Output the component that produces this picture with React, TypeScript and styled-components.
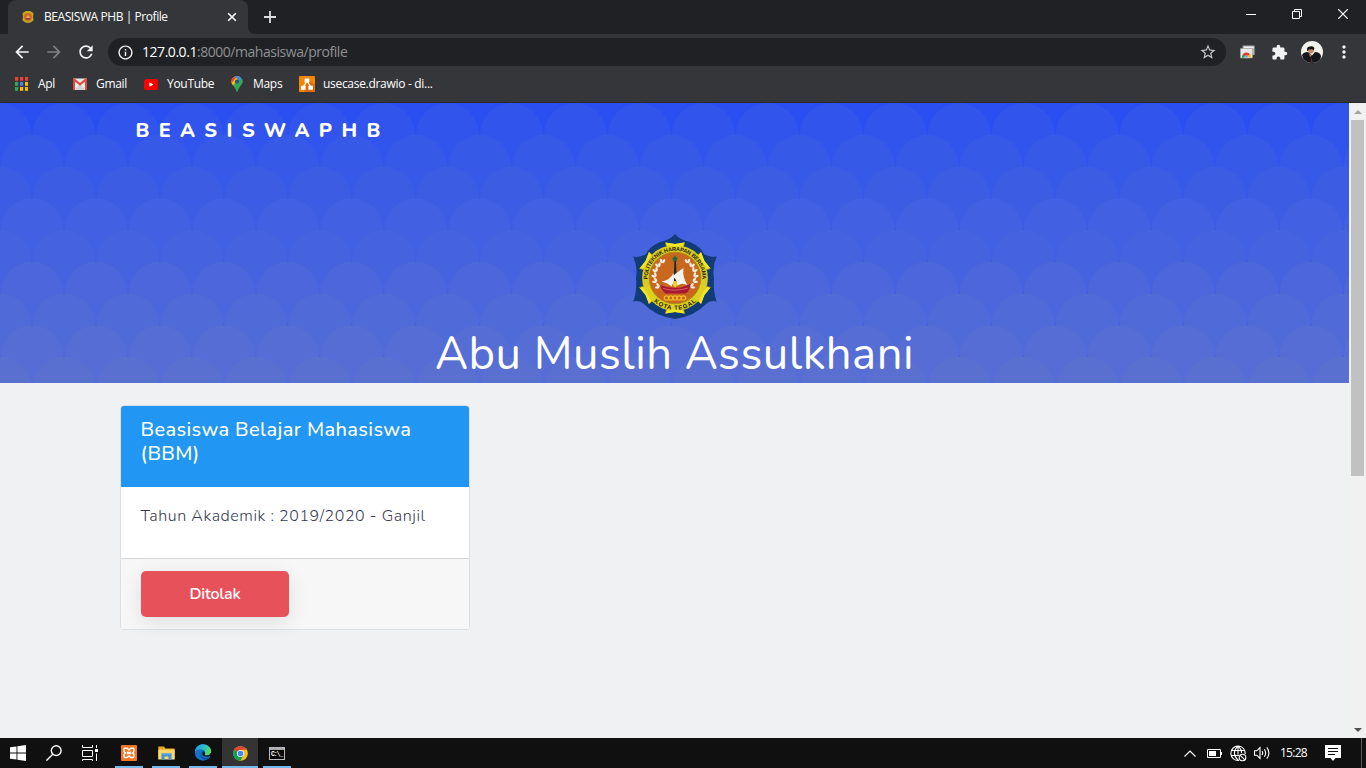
import React from 'react';
import styled, { createGlobalStyle } from 'styled-components';
import {
  MdArrowBack,
  MdArrowForward,
  MdRefresh,
  MdInfoOutline,
  MdStarOutline,
  MdExtension,
  MdMoreVert,
} from 'react-icons/md';

const UI_FONT = '"Open Sans", "Noto Sans", sans-serif';
const PAGE_FONT = 'Nunito, Lato, sans-serif';

const GlobalStyle = createGlobalStyle`
  *, *::before, *::after { box-sizing: border-box; }
  body { margin: 0; overflow: hidden; background: #f0f1f3; }
  svg { display: block; flex: none; }
`;

const Screen = styled.div`
  display: flex;
  flex-direction: column;
  width: 1366px;
  height: 768px;
`;

/* ---------- Browser chrome ---------- */

const TabStrip = styled.div`
  display: flex;
  height: 34px;
  padding-left: 8px;
  background: #202124;
  color: #fff;
`;

const Tab = styled.div`
  display: flex;
  align-items: center;
  width: 240px;
  padding: 0 9px 0 13px;
  border-radius: 8px 8px 0 0;
  background: #35363a;
`;

const TabFoot = styled.svg`
  align-self: flex-end;
`;

const TabTitle = styled.span`
  flex: 1;
  margin-left: 9px;
  font: 400 12px/16px ${UI_FONT};
  letter-spacing: -0.43px;
  white-space: pre;
`;

const NewTab = styled.div`
  display: flex;
  align-items: center;
  margin-left: 8px;
`;

const WindowButtons = styled.div`
  display: flex;
  margin-left: auto;
`;

const WindowButton = styled.div`
  display: flex;
  align-items: center;
  justify-content: center;
  width: 46px;
  height: 28px;
`;

const Toolbar = styled.div`
  display: flex;
  align-items: center;
  height: 36px;
  padding: 0 12px;
  background: #35363a;
  color: #f1f3f4;
`;

const ToolIcon = styled.div<{ $dim?: boolean }>`
  display: flex;
  width: 32px;
  color: ${(p) => (p.$dim ? '#808184' : '#f1f3f4')};
`;

const Omnibox = styled.div`
  display: flex;
  align-items: center;
  width: 1118px;
  height: 28px;
  padding: 0 9px;
  border-radius: 14px;
  background: #202124;
`;

const Url = styled.span`
  flex: 1;
  margin-left: 8px;
  color: #8f9194;
  font: 400 14px/20px ${UI_FONT};
  letter-spacing: -0.46px;

  b { color: #fff; font-weight: 400; }
`;

const Extensions = styled.div`
  display: flex;
  align-items: center;
  margin-left: 14px;
`;

const ExtensionSlot = styled.div<{ $width: number }>`
  display: flex;
  width: ${(p) => p.$width}px;
`;

const BookmarkBar = styled.div`
  display: flex;
  align-items: center;
  height: 33px;
  padding: 0 0 4px 14px;
  border-bottom: 1px solid #29292c;
  background: #35363a;
`;

const Bookmark = styled.div<{ $width: number; $gap: number }>`
  display: flex;
  align-items: center;
  gap: ${(p) => p.$gap}px;
  width: ${(p) => p.$width}px;
  color: #fff;
  font: 400 12px/16px ${UI_FONT};
  letter-spacing: -0.3px;
  white-space: nowrap;
`;

/* ---------- Web page ---------- */

const Viewport = styled.div`
  display: flex;
  height: 635px;
`;

const Page = styled.main`
  width: 1349px;
  background: #f0f1f3;
  font-family: ${PAGE_FONT};
`;

const Hero = styled.header`
  position: relative;
  display: flex;
  flex-direction: column;
  align-items: center;
  height: 280px;
  background: #2a4ff1;
  color: #fff;
`;

const HeroPattern = styled.svg`
  position: absolute;
  inset: 0;
`;

const Brand = styled.div`
  position: relative;
  align-self: flex-start;
  padding: 14px 0 0 135.5px;
  font-weight: 800;
  font-size: 20px;
  line-height: 28px;
  letter-spacing: 9.4px;
`;

const Crest = styled.svg`
  position: relative;
  margin-top: 89px;
`;

const StudentName = styled.h1`
  position: relative;
  margin: 6px 0 0;
  font-weight: 400;
  font-size: 45.4px;
  line-height: 56px;
  letter-spacing: 0.5px;
`;

const Card = styled.section`
  width: 350px;
  margin: 22px 0 0 120px;
  border: 1px solid #dcdee1;
  border-radius: 4px;
  background: #fff;
  letter-spacing: 0.5px;
`;

const CardHeader = styled.h5`
  height: 81px;
  margin: 0;
  padding: 12px 19.5px;
  border-radius: 3px 3px 0 0;
  background: #2196f3;
  color: #fff;
  font-weight: 500;
  font-size: 20px;
  line-height: 24px;
  letter-spacing: 0.36px;
`;

const CardBody = styled.div`
  height: 71px;
  padding: 17px 19.5px;
  color: #343a52;
  font-weight: 350;
  font-size: 16px;
  line-height: 24px;
  letter-spacing: 0.56px;
`;

const CardFooter = styled.div`
  height: 71px;
  padding: 12px 20px;
  border-top: 1px solid #d5d6d8;
  border-radius: 0 0 3px 3px;
  background: #f7f7f7;
`;

const StatusButton = styled.button`
  width: 148px;
  height: 46px;
  padding: 0;
  border: 0;
  border-radius: 5px;
  background: #e7515a;
  box-shadow: 0 5px 20px rgba(0, 0, 0, 0.1);
  color: #fff;
  font: 600 16px/24px ${PAGE_FONT};
  letter-spacing: -0.2px;
`;

const Scrollbar = styled.div`
  display: flex;
  flex-direction: column;
  align-items: center;
  width: 17px;
  background: #f1f1f1;
`;

const ScrollArrow = styled.div`
  display: flex;
  align-items: center;
  justify-content: center;
  height: 17px;
`;

const ScrollThumb = styled.div`
  width: 13px;
  height: 356px;
  margin-bottom: auto;
  background: #c1c1c1;
`;

/* ---------- Taskbar ---------- */

const Taskbar = styled.footer`
  display: flex;
  height: 30px;
  background: #101010;
  color: #fff;
`;

const SystemButton = styled.div`
  display: flex;
  align-items: center;
  justify-content: center;
  width: 36px;
  height: 30px;
`;

const Apps = styled.div`
  display: flex;
  gap: 1px;
  margin-left: 3px;
`;

const AppButton = styled.div<{ $active?: boolean; $top?: number }>`
  display: flex;
  flex-direction: column;
  align-items: center;
  justify-content: space-between;
  width: 36px;
  height: 30px;
  padding-top: ${(p) => p.$top ?? 7}px;
  background: ${(p) => (p.$active ? '#343434' : 'transparent')};

  &::after {
    content: '';
    width: ${(p) => (p.$active ? 36 : 28)}px;
    height: 2px;
    background: #76b9ed;
  }
`;

const Tray = styled.div`
  display: flex;
  align-items: center;
  margin-left: auto;
`;

const TraySlot = styled.div<{ $width: number }>`
  display: flex;
  width: ${(p) => p.$width}px;
`;

const Clock = styled.span`
  width: 45px;
  font: 400 12px/16px ${UI_FONT};
  letter-spacing: -0.75px;
`;

const ShowDesktop = styled.div`
  align-self: stretch;
  width: 5px;
  border-left: 1px solid #5c5c5c;
`;

/* ---------- Drawings ---------- */

const SCALE_ROWS = [
  '#3155ec', '#3659e8', '#3c5ce4', '#4160e2', '#4663df', '#4b67db', '#506ad8', '#556dd5', '#5a70d1',
];

function Scales() {
  return (
    <HeroPattern width="1349" height="280">
      {SCALE_ROWS.map((color, row) => (
        <g key={color} fill={color}>
          {Array.from({ length: 23 }, (_, col) => (
            <circle key={col} cx={col * 63.95 + (row % 2 ? 32 : 0)} cy={row * 31.72 + 31.5} r="31.4" />
          ))}
        </g>
      ))}
    </HeroPattern>
  );
}

const LEAVES = [
  [-18, 8, -70], [-20.5, 2.5, -60], [-21, -3, -45], [-19.8, -8.5, -30], [-17, -13.5, -15], [-12.5, -17.5, 5],
];

function CollegeCrest() {
  const tabs = [0, 60, 120, 180, 240, 300];
  return (
    <Crest width="86" height="86" viewBox="-43 -44 86 86">
      <path
        d="M0-44Q5-38 15-36Q26-31 29-24Q35-20 41.8-21.5Q37-11 39 0Q38 14 41.8 23.5Q35 22 31 26Q20 38 0 41Q-20 38-31 26Q-35 22-41.8 23.5Q-38 14-39 0Q-37-11-41.8-21.5Q-35-20-29-24Q-26-31-15-36Q-5-38 0-44Z"
        fill="#113c77"
      />
      <circle r="32.9" fill="#d9cb20" />
      {tabs.map((a) => (
        <g key={a} transform={`rotate(${a})`}>
          <path d="M-9.5-35.5L0-34L9.5-35.5L7.5-26H-7.5Z" fill="#ded01f" />
          <path d="M-9.5-35.5L0-34L9.5-35.5L8.7-32.5L0-31.5L-8.7-32.5Z" fill="#f0e727" />
          <path d="M-9.5-35.5L-8.5-31M9.5-35.5L8.5-31" stroke="#9c8f17" strokeWidth="0.7" />
        </g>
      ))}
      <circle r="25.8" fill="#c9671f" stroke="#a58a1c" strokeWidth="0.9" />
      <defs>
        <path id="crestTop" d="M-26.8 6A27.4 27.4 0 1 1 26.8 6" />
        <path id="crestBottom" d="M-27 17A32 32 0 0 0 27 17" />
      </defs>
      <g fill="#26230f" fontFamily='"Liberation Sans", sans-serif' fontWeight="700" textAnchor="middle">
        <text fontSize="5.6">
          <textPath href="#crestTop" startOffset="50%" textLength="88">POLITEKNIK HARAPAN BERSAMA</textPath>
        </text>
        <text fontSize="6">
          <textPath href="#crestBottom" startOffset="50%" textLength="46">KOTA TEGAL</textPath>
        </text>
      </g>
      {[1, -1].map((side) => (
        <g key={side} transform={`scale(${side} 1)`} fill="#f1efe3">
          {LEAVES.map(([x, y, r], i) => (
            <g key={i} transform={`translate(${x} ${y}) rotate(${r})`}>
              <ellipse cx="-1.4" cy="0" rx="1.2" ry="2.3" transform="rotate(-25)" />
              <ellipse cx="1.4" cy="0" rx="1.2" ry="2.3" transform="rotate(25)" />
            </g>
          ))}
        </g>
      ))}
      <path d="M-0.6-17H0.9L1.9 3H-1.4Z" fill="#172b35" />
      <path d="M0-23L1-20.5L3.2-20.2L1.6-18.6L2.2-16L0-17.4L-2.2-16L-1.6-18.6L-3.2-20.2L-1-20.5Z" fill="#166b45" />
      <path d="M-1.5-5Q-5 2.5-13.5 3.5Q-7 5-3.5 8.5L-1 3Z" fill="#f4f3ef" />
      <path d="M8.5-10Q-0.5-4-3-1Q2 0 2.5 8Q7 3.5 13 8Q7-1 8.5-10Z" fill="#f4f3ef" />
      <path d="M-15 7Q-5 11 6 9.5L15.5 6Q14 15 10 15.5H-9Q-13 13.5-15 7Z" fill="#a91734" />
      <path d="M-12 10.5Q0 14 13 10" fill="none" stroke="#da6b63" strokeWidth="0.9" />
      <ellipse cy="6" rx="2" ry="3" fill="#eed927" />
      {[-8.4, -4.2, 0, 4.2, 8.4].map((x) => (
        <ellipse key={x} cx={x} cy="20" rx="2.4" ry="2.2" fill="none" stroke="#efbd24" strokeWidth="1.2" />
      ))}
    </Crest>
  );
}

function Favicon() {
  return (
    <svg width="14" height="14" viewBox="-7 -7 14 14">
      <path d="M0-7L2.5-5.2L6.3-3.8L5.8 0L6.3 3.8L3 5.6L0 6.8L-3 5.6L-6.3 3.8L-5.8 0L-6.3-3.8L-2.5-5.2Z" fill="#263c52" />
      <path d="M-2-6H2L5.5-4L5 0L5.5 3.5L2 5.8H-2L-5.5 3.5L-5 0L-5.5-4Z" fill="#c9a51c" />
      <circle r="3.9" fill="#d0691d" />
      <path d="M-2.2 1.2L0-2.2L2.2 1.2Z" fill="#e8a57e" />
      <path d="M-2.6 1.2H2.6L1.6 2.5H-1.6Z" fill="#8c2a24" />
    </svg>
  );
}

const APPS_COLORS = ['#ea4335', '#ea4335', '#ea4335', '#34a853', '#4285f4', '#fbbc05', '#34a853', '#fbbc05', '#fbbc05'];

function AppsGrid() {
  return (
    <svg width="14" height="14">
      {APPS_COLORS.map((c, i) => (
        <rect key={i} x={1 + (i % 3) * 5} y={Math.floor(i / 3) * 5} width="3.2" height="3.8" fill={c} />
      ))}
    </svg>
  );
}

function GmailIcon() {
  return (
    <svg width="14" height="12" viewBox="0 0 14 12">
      <rect y="0.5" width="14" height="11.5" rx="0.8" fill="#e9e9e9" />
      <path d="M2 12L7 6.5L12 12Z" fill="#d0d0d0" />
      <path d="M0 1.3Q0 0 1.3 0.3L7 5L12.7 0.3Q14 0 14 1.3V12H12V3.6L7 7.8L2 3.6V12H0Z" fill="#dd4b3e" />
    </svg>
  );
}

function YouTubeIcon() {
  return (
    <svg width="14" height="11" viewBox="0 0 14 11">
      <rect width="14" height="11" rx="2.6" fill="#f00" />
      <path d="M5.4 3.2L9.4 5.5L5.4 7.8Z" fill="#fff" />
    </svg>
  );
}

function MapsIcon() {
  return (
    <svg width="12" height="16" viewBox="0 0 12 16">
      <clipPath id="pin">
        <path d="M6 0A5.6 5.6 0 0 1 11.6 5.6C11.6 9 8 10.5 6.8 15Q6 16.6 5.2 15C4 10.5 0.4 9 0.4 5.6A5.6 5.6 0 0 1 6 0Z" />
      </clipPath>
      <g clipPath="url(#pin)">
        <rect width="12" height="16" fill="#34a853" />
        <path d="M-1 13L12-2V-2H-1Z" fill="#fbbc04" />
        <path d="M-1 9L7-1H-1Z" fill="#ea4335" />
        <path d="M3-1H13V3L8 5Z" fill="#4285f4" />
        <path d="M8 5L12 1V6L6 11Z" fill="#34a853" />
      </g>
      <circle cx="6" cy="5.6" r="2.1" fill="#2b4d91" />
    </svg>
  );
}

function DrawioIcon() {
  return (
    <svg width="16" height="16" viewBox="0 0 16 16">
      <rect width="16" height="16" rx="0.8" fill="#f08705" />
      <path d="M9 3L16 9V16H5Z" fill="#df6c0c" />
      <path d="M7.4 6L4.2 11M8.6 6L11.8 11" stroke="#fff" strokeWidth="1.3" />
      <rect x="5.6" y="2.4" width="4.8" height="4" rx="0.5" fill="#fff" />
      <rect x="2" y="9.8" width="4.6" height="4" rx="0.5" fill="#fff" />
      <rect x="9.4" y="9.8" width="4.6" height="4" rx="0.5" fill="#fff" />
    </svg>
  );
}

function StoreExtensionIcon() {
  return (
    <svg width="15" height="14" viewBox="0 0 15 14">
      <rect x="2.6" y="0.5" width="12" height="9.5" rx="0.6" fill="#aeb0b2" />
      <rect x="4" y="1.6" width="9.6" height="1.6" fill="#f2f2f2" />
      <rect x="0.4" y="3.5" width="12" height="9.5" rx="0.6" fill="#e8e8e8" stroke="#9b9b9b" strokeWidth="0.6" />
      <path d="M1.9 12.7A4.6 4.6 0 0 1 4 8.4L6.4 12.7Z" fill="#2ba24c" />
      <path d="M2.6 9.6A4.6 4.6 0 0 1 10.3 9.4L6.4 11.4Z" fill="#e33b2e" />
      <path d="M9 9.8L10.4 9.3Q11.4 11 11.1 12.7H6.4Z" fill="#fbc116" />
      <path d="M4.5 12.7A2 2 0 0 1 8.5 12.7Z" fill="#4285f4" stroke="#fff" strokeWidth="0.5" />
    </svg>
  );
}

function Avatar() {
  return (
    <svg width="22" height="22" viewBox="0 0 22 22">
      <clipPath id="face"><circle cx="11" cy="11" r="11" /></clipPath>
      <g clipPath="url(#face)">
        <rect width="22" height="22" fill="#f1f3ec" />
        <path d="M1 14Q2 11.5 5.5 11L8 11.5L11 14.5L14 11Q19 11 20 15L19 22H3Z" fill="#15161b" />
        <path d="M6.5 8Q8 13 10.5 12.5Q13 12 12.8 7.5L9 6.5Z" fill="#c48762" />
        <path d="M6 9.5Q5.7 5.6 9 5.6Q12 4.4 13.4 7L12.8 9.5Q11.6 7.6 9.5 8.4Q7.5 8 6.8 10Z" fill="#15110f" />
        <path d="M7.6 12L11 14.5L9 16Z" fill="#b87a59" />
        <path d="M10.5 16L11.8 22H9.3Z" fill="#652a28" />
      </g>
    </svg>
  );
}

function ChromeIcon() {
  return (
    <svg width="15" height="15" viewBox="-8 -8 16 16">
      <circle r="7.8" fill="#fbc116" />
      <path d="M0 0L-6.75-3.9A7.8 7.8 0 0 1 6.75-3.9Z" fill="#db4437" />
      <path d="M-6.75-3.9A7.8 7.8 0 0 0 0 7.8L3.3 1.7L0 0Z" fill="#0f9d58" />
      <path d="M0-3.9H6.75L3.4 1.9Z" fill="#fbc116" />
      <circle r="3.8" fill="#f1f1f1" />
      <circle r="2.9" fill="#4285f4" />
    </svg>
  );
}

function EdgeIcon() {
  return (
    <svg width="17" height="17" viewBox="0.5 0 17 17">
      <defs>
        <linearGradient id="edgeWave" x1="0" y1="0.2" x2="1" y2="0.5">
          <stop offset="0" stopColor="#1b9de0" />
          <stop offset="0.5" stopColor="#27bdd0" />
          <stop offset="1" stopColor="#5fdd55" />
        </linearGradient>
      </defs>
      <circle cx="8.5" cy="8.5" r="8.2" fill="#1273c6" />
      <path d="M0.3 8C1 2.7 4.5 0.2 8.5 0.2C13 0.2 16.8 3.5 16.8 7.3C16.8 10 14.5 11.5 12.2 11.5C10.4 11.5 9.8 10.7 10.4 9.8C11 8.8 10.8 7 9 6C6 4.4 1.8 5 0.3 8Z" fill="url(#edgeWave)" />
      <path d="M7.2 8Q5.5 12.5 10 13.8Q13 14.5 15.8 12.7L14.5 14.2Q11.5 16.5 8.2 15Q4 12 7.2 8Z" fill="#0c4fa0" />
      <path d="M8 8.2Q7 11.4 11 12.6Q13.8 13 15.6 12L17.6 10.5L16.8 8.6Q15.2 11.5 12.2 11.5C10.4 11.5 9.8 10.7 10.4 9.8Q10.5 8 9.3 7.2Q8.5 7.2 8 8.2Z" fill="#101010" />
    </svg>
  );
}

function ExplorerIcon() {
  return (
    <svg width="17" height="16" viewBox="0 0 17 16">
      <path d="M0.3 1.5H6L7.5 3.5H16.5V14H0.3Z" fill="#e9a820" />
      <rect x="0.3" y="4.5" width="16.4" height="10" fill="#ffd766" />
      <path d="M3.5 8.5H13.5V15H10.5V11.5H6.5V15H3.5Z" fill="#3f93d8" />
      <path d="M3.5 8.5H13.5V9.7H3.5Z" fill="#56a9e7" />
    </svg>
  );
}

function XamppIcon() {
  return (
    <svg width="16" height="16" viewBox="0 0 16 16">
      <rect width="16" height="16" rx="1" fill="#f37623" />
      <path d="M4 3.2H6.2L8 5L9.8 3.2H12Q13.2 3.2 13 5.5Q12.8 7.4 11.8 8Q13 8.6 13 10.6Q13 12.6 12 12.6H10L8 11L6 12.6H4Q3 12.6 3 10.6Q3 8.6 4.2 8Q3.2 7.4 3 5.5Q2.8 3.2 4 3.2ZM6 6.8L10 9M10 6.8L6 9" fill="none" stroke="#fff" strokeWidth="1.5" />
    </svg>
  );
}

function TerminalIcon() {
  return (
    <svg width="16" height="14" viewBox="0 0 16 14">
      <rect x="0.5" y="0.5" width="15" height="12" fill="#050505" stroke="#b9b9b9" />
      <rect x="1" y="1" width="14" height="2" fill="#a9abad" />
      <text x="2" y="9.4" fill="#fff" fontFamily='"Liberation Mono", monospace' fontSize="6.4" fontWeight="700" textLength="12">C:\_</text>
    </svg>
  );
}

const line = { fill: 'none', stroke: '#fff' } as const;

export default function App() {
  return (
    <Screen>
      <GlobalStyle />
      <TabStrip>
        <Tab>
          <Favicon />
          <TabTitle>BEASISWA PHB | Profile</TabTitle>
          <svg width="14" height="14" {...line} strokeWidth="1.6"><path d="M3.2 3.2L10.8 10.8M10.8 3.2L3.2 10.8" /></svg>
        </Tab>
        <TabFoot width="8" height="8"><path d="M0 0Q0 8 8 8H0Z" fill="#35363a" /></TabFoot>
        <NewTab>
          <svg width="12" height="12" fill="none" stroke="#dcdde0" strokeWidth="1.8"><path d="M6 0V12M0 6H12" /></svg>
        </NewTab>
        <WindowButtons>
          <WindowButton><svg width="10" height="10" {...line}><path d="M0 5.5H10" /></svg></WindowButton>
          <WindowButton><svg width="10" height="10" {...line}><path d="M0.5 2.5H7.5V9.5H0.5ZM2.5 2.5V0.5H9.5V7.5H7.5" /></svg></WindowButton>
          <WindowButton><svg width="10" height="10" {...line} strokeWidth="1.2"><path d="M0 0L10 10M10 0L0 10" /></svg></WindowButton>
        </WindowButtons>
      </TabStrip>

      <Toolbar>
        <ToolIcon><MdArrowBack size={20} /></ToolIcon>
        <ToolIcon $dim><MdArrowForward size={20} /></ToolIcon>
        <ToolIcon><MdRefresh size={20} /></ToolIcon>
        <Omnibox>
          <MdInfoOutline size={17} />
          <Url><b>127.0.0.1</b>:8000/mahasiswa/profile</Url>
          <MdStarOutline size={18} color="#c6c8ca" />
        </Omnibox>
        <Extensions>
          <ExtensionSlot $width={31}><StoreExtensionIcon /></ExtensionSlot>
          <ExtensionSlot $width={30}><MdExtension size={17} /></ExtensionSlot>
          <ExtensionSlot $width={33}><Avatar /></ExtensionSlot>
          <MdMoreVert size={20} />
        </Extensions>
      </Toolbar>

      <BookmarkBar>
        <Bookmark $width={59} $gap={10}><AppsGrid />Apl</Bookmark>
        <Bookmark $width={71} $gap={9}><GmailIcon />Gmail</Bookmark>
        <Bookmark $width={87} $gap={9}><YouTubeIcon />YouTube</Bookmark>
        <Bookmark $width={68} $gap={10}><MapsIcon />Maps</Bookmark>
        <Bookmark $width={140} $gap={8}><DrawioIcon />usecase.drawio - di...</Bookmark>
      </BookmarkBar>

      <Viewport>
        <Page>
          <Hero>
            <Scales />
            <Brand>BEASISWAPHB</Brand>
            <CollegeCrest />
            <StudentName>Abu Muslih Assulkhani</StudentName>
          </Hero>
          <Card>
            <CardHeader>Beasiswa Belajar Mahasiswa (BBM)</CardHeader>
            <CardBody>Tahun Akademik : 2019/2020 - Ganjil</CardBody>
            <CardFooter><StatusButton>Ditolak</StatusButton></CardFooter>
          </Card>
        </Page>
        <Scrollbar>
          <ScrollArrow><svg width="8" height="4"><path d="M0 4L4 0L8 4Z" fill="#a3a3a3" /></svg></ScrollArrow>
          <ScrollThumb />
          <ScrollArrow><svg width="8" height="4"><path d="M0 0L4 4L8 0Z" fill="#505050" /></svg></ScrollArrow>
        </Scrollbar>
      </Viewport>

      <Taskbar>
        <SystemButton>
          <svg width="16" height="16" fill="#fff"><path d="M0 2.3L6.5 1.4V7.5H0ZM7.4 1.3L16 0V7.5H7.4ZM0 8.4H6.5V14.6L0 13.7ZM7.4 8.4H16V16L7.4 14.8Z" /></svg>
        </SystemButton>
        <SystemButton>
          <svg width="16" height="16" {...line} strokeWidth="1.4"><circle cx="10.2" cy="5.6" r="4.9" /><path d="M6.8 9.2L0.4 15.6" /></svg>
        </SystemButton>
        <SystemButton>
          <svg width="16" height="16" {...line}>
            <path d="M0.5 0V2.5H10.5V0M0.5 5.5H10.5V11.5H0.5ZM0.5 16V14.5H10.5V16M14.5 0V3M14.5 8.5V16" />
            <rect x="13" y="4" width="3" height="3" fill="#fff" stroke="none" />
          </svg>
        </SystemButton>
        <Apps>
          <AppButton><XamppIcon /></AppButton>
          <AppButton><ExplorerIcon /></AppButton>
          <AppButton $top={6}><EdgeIcon /></AppButton>
          <AppButton $active $top={8}><ChromeIcon /></AppButton>
          <AppButton $top={9}><TerminalIcon /></AppButton>
        </Apps>
        <Tray>
          <TraySlot $width={23}>
            <svg width="12" height="7" {...line} strokeWidth="1.2"><path d="M0.5 6.5L6 1L11.5 6.5" /></svg>
          </TraySlot>
          <TraySlot $width={23}>
            <svg width="16" height="9"><path d="M0.5 0.5H13.5V8.5H0.5ZM14.5 3V6" {...line} /><rect x="2" y="2" width="7" height="5" fill="#fff" /></svg>
          </TraySlot>
          <TraySlot $width={24}>
            <svg width="17" height="17" {...line} strokeWidth="1.1">
              <path d="M9 15.4A7.2 7.2 0 1 1 15.2 9M8 0.8Q0.8 8 8 15.2M8 0.8Q11.8 4.5 11.5 8M8 0.8V9.5M1 5.5H14.8M1 10.5H9" />
              <circle cx="12.5" cy="12.5" r="3.3" /><path d="M10.3 10.3L14.8 14.8" />
            </svg>
          </TraySlot>
          <TraySlot $width={26}>
            <svg width="17" height="14" {...line} strokeWidth="1.1">
              <path d="M0.5 4.8H2.8L6 1.5V12.5L2.8 9.2H0.5ZM8 5Q9.4 7 8 9M10.3 3.3Q13 7 10.3 10.7M12.8 1.3Q17 7 12.8 12.7" />
            </svg>
          </TraySlot>
          <Clock>15:28</Clock>
          <TraySlot $width={36}>
            <svg width="16" height="16"><path d="M0 0H16V13H10.5L8 16L5.5 13H0Z" fill="#fff" /><path d="M3 3.5H13M3 6.5H13M3 9.5H10" stroke="#101010" /></svg>
          </TraySlot>
          <ShowDesktop />
        </Tray>
      </Taskbar>
    </Screen>
  );
}
